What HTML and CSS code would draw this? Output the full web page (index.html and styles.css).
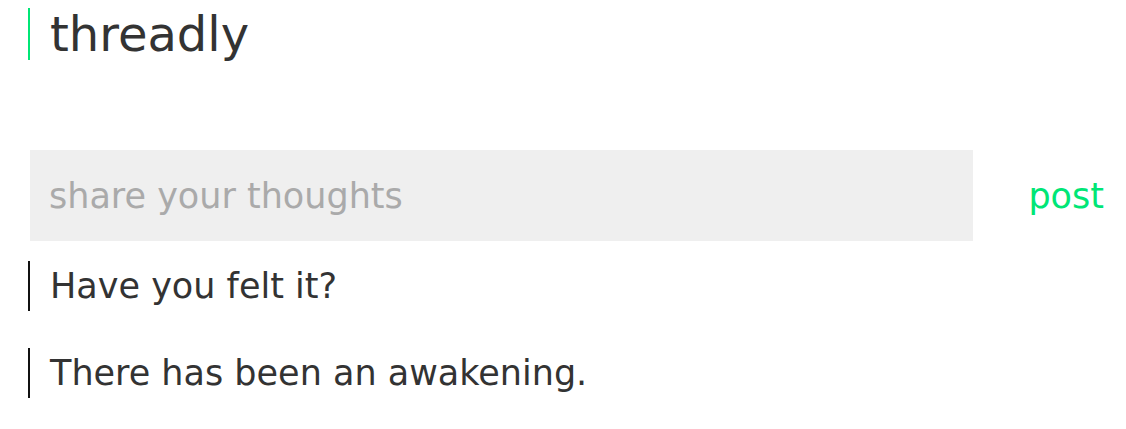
FILE: index.html
```html
<!DOCTYPE html>
<html>
<head>
<meta charset="utf-8">
<link rel="stylesheet" href="styles.css">
</head>
<body>
<div class="app">
  <h1 class="brand">threadly</h1>
  <form class="composer">
    <input class="composer-input" type="text" placeholder="share your thoughts">
    <button class="composer-post" type="button">post</button>
  </form>
  <ul class="thread">
    <li class="thread-item">Have you felt it?</li>
    <li class="thread-item">There has been an awakening.</li>
  </ul>
</div>
</body>
</html>
```

FILE: styles.css
```css
html, body {
  margin: 0;
  padding: 0;
  background: #fff;
}
.app {
  font-family: "DejaVu Sans", sans-serif;
  color: #333;
  padding: 8px 0 0 28px;
}
.brand {
  margin: 0;
  font-weight: normal;
  font-size: 48px;
  line-height: 52px;
  border-left: 2px solid #00e676;
  padding-left: 20px;
}
.composer {
  display: flex;
  margin: 90px 0 0 2px;
  height: 91px;
}
.composer-input {
  flex: 1;
  min-width: 0;
  border: 0;
  outline: none;
  background: #efefef;
  font-family: inherit;
  font-size: 35px;
  color: #333;
  padding: 0 0 0 19px;
  margin: 0;
}
.composer-input::placeholder {
  color: #aaa;
}
.composer-post {
  border: 0;
  background: transparent;
  font-family: inherit;
  font-size: 35px;
  color: #00e676;
  padding: 0 22px 0 55px;
  margin: 0;
  cursor: pointer;
}
.thread {
  list-style: none;
  margin: 20px 0 0;
  padding: 0;
  display: flex;
  flex-direction: column;
  gap: 37px;
}
.thread-item {
  border-left: 2px solid #111;
  padding-left: 20px;
  font-size: 35px;
  line-height: 50px;
}
```
